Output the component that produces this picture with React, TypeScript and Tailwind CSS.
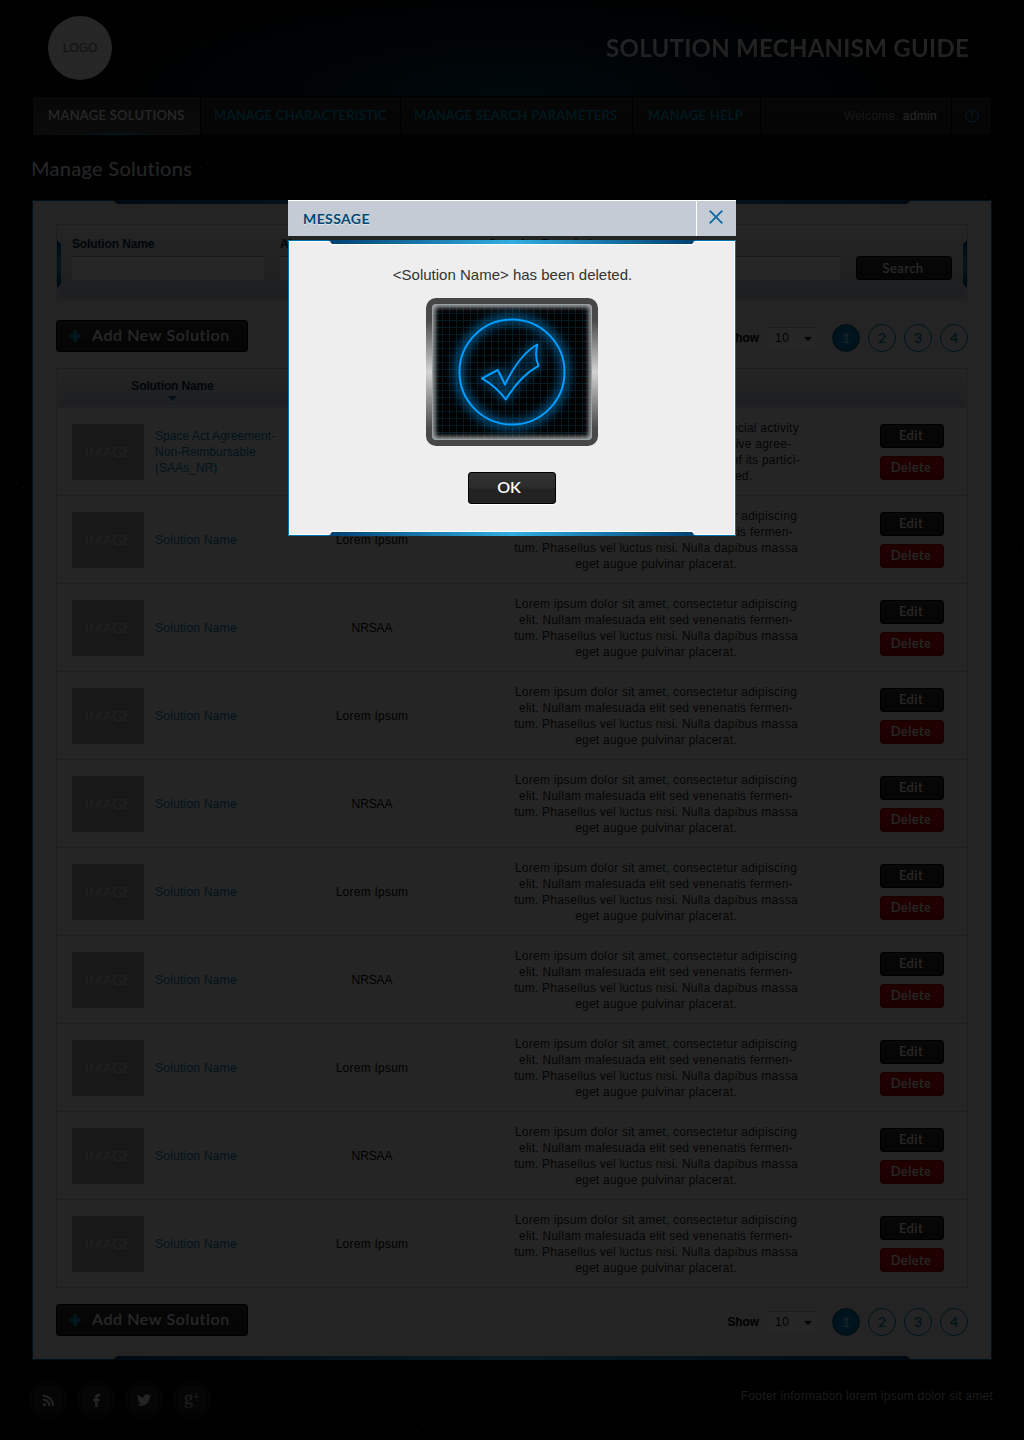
import React from "react";
import { FaFacebookF, FaRss, FaTwitter } from "react-icons/fa";

const LOREM = [
  "Lorem ipsum dolor sit amet, consectetur adipiscing",
  "elit. Nullam malesuada elit sed venenatis fermen-",
  "tum. Phasellus vel luctus nisi. Nulla dapibus massa",
  "eget augue pulvinar placerat.",
];

const SPACE_ACT = [
  "Engagement with any partner on any official activity",
  "under all the terms of any legally effective agree-",
  "ment in which each side bears the cost of its partici-",
  "pation and no fees are exchanged.",
];

const ROWS = Array.from({ length: 10 }, (_, i) => ({
  name: i === 0 ? ["Space Act Agreement-", "Non-Reimbursable", "(SAAs_NR)"] : ["Solution Name"],
  type: i % 2 === 0 ? "NRSAA" : "Lorem Ipsum",
  text: i === 0 ? SPACE_ACT : LOREM,
}));

const STARS = Array.from({ length: 420 }, (_, i) => ({
  x: (i * 397 + ((i * i * 31) % 613)) % 1024,
  y: (i * 733 + ((i * i * 17) % 911)) % 1440,
  o: 0.1 + ((i * 7) % 11) / 20,
}));

function Bar({ id, w, cut = 4, flip = false, className }: { id: string; w: number; cut?: number; flip?: boolean; className: string }) {
  const pts = flip ? `${cut},0 ${w - cut},0 ${w},4 0,4` : `0,0 ${w},0 ${w - cut},4 ${cut},4`;
  return (
    <svg className={className} width={w} height={4} viewBox={`0 0 ${w} 4`}>
      <defs>
        <linearGradient id={id}>
          <stop offset="0" stopColor="#003f73" />
          <stop offset="0.5" stopColor="#32aee2" />
          <stop offset="1" stopColor="#003f73" />
        </linearGradient>
      </defs>
      <polygon points={pts} fill={`url(#${id})`} />
    </svg>
  );
}

function Tab({ id, right = false }: { id: string; right?: boolean }) {
  return (
    <svg className={right ? "absolute right-0 top-[15px]" : "absolute left-0 top-[15px]"} width={4} height={48}>
      <defs>
        <linearGradient id={id} x2="0" y2="1">
          <stop offset="0" stopColor="#003f73" />
          <stop offset="0.5" stopColor="#1f8fc4" />
          <stop offset="1" stopColor="#003f73" />
        </linearGradient>
      </defs>
      <polygon points={right ? "4,0 0,4 0,44 4,48" : "0,0 4,4 4,44 0,48"} fill={`url(#${id})`} />
    </svg>
  );
}

function AddButton() {
  return (
    <button className="flex h-8 w-48 items-center whitespace-nowrap rounded-[3px] border border-black bg-linear-to-b from-[#303030] to-[#222] pl-3 font-[Lato] text-[16px] font-semibold leading-6 tracking-[0.6px] text-white">
      <svg width="13" height="12" viewBox="0 0 13 12" className="mr-[10px]">
        <path d="M4.500 0.500h3.500v4h4v3H8v4H4.500v-4H.5v-3h4z" fill="#00a0dc" />
      </svg>
      <span className="-mt-0.5">Add New Solution</span>
    </button>
  );
}

function Pager() {
  return (
    <div className="flex items-center">
      <span className="mr-[9px] text-[12px] font-bold tracking-[-0.1px] text-black">Show</span>
      <div className="mr-4 flex h-[22px] w-12 items-center justify-between border-t border-[#bbb] bg-white pb-px pl-[7px] pr-1 text-[12px] tracking-[0.6px] text-black">
        10
        <svg width="8" height="4" className="mt-[2px]">
          <path d="M0 0h8L4 4z" fill="#000" />
        </svg>
      </div>
      <div className="flex gap-2 font-[Lato] text-[14px] font-semibold leading-[24px]">
        {[1, 2, 3, 4].map((n) => (
          <span
            key={n}
            className={
              n === 1
                ? "flex size-7 justify-center rounded-full border border-[#005a88] bg-[radial-gradient(circle,#009bd2,#006fa8)] pt-px text-[#a0dcf5]"
                : "flex size-7 justify-center rounded-full border border-[#0080b0] pt-px text-[#0080b0]"
            }
          >
            {n}
          </span>
        ))}
      </div>
    </div>
  );
}

function Field({ label, className }: { label: string; className: string }) {
  return (
    <label className={`${className} block text-[12px] font-bold leading-4 tracking-[-0.13px] text-[#002840]`}>
      <span className="block whitespace-nowrap">{label}</span>
      <span className="mt-1 block h-6 border-t border-[#9fa8b5] bg-white" />
    </label>
  );
}

function NavItem({ label, className }: { label: string; className: string }) {
  return (
    <a className={`${className} flex items-center whitespace-nowrap border-l border-l-black pl-[13px] text-[#00a0d0]`}>{label}</a>
  );
}

function Page() {
  return (
    <div className="relative h-[1440px] w-[1024px] bg-black">
      <svg className="absolute inset-0" width="1024" height="1440">
        {STARS.map((s, i) => (
          <rect key={i} x={s.x} y={s.y} width="1" height="1" fill="#fff" opacity={s.o} />
        ))}
      </svg>
      <div className="relative flex h-full flex-col">
        <header className="flex h-[96px] items-start justify-between bg-[radial-gradient(ellipse_430px_115px_at_50%_100%,#003a52_0%,#001a2a_50%,transparent_100%)] pl-12 pr-[55px] pt-4">
          <div className="flex size-16 items-center justify-center rounded-full bg-white text-[12px] text-[#5c6b78]">LOGO</div>
          <h1 className="mt-4 whitespace-nowrap bg-linear-to-b from-white to-[#c8c8c8] bg-clip-text font-[Lato] text-[24px] font-bold leading-8 tracking-[0.27px] text-transparent">SOLUTION MECHANISM GUIDE</h1>
        </header>

        <nav className="ml-[33px] mt-px flex h-[38px] w-[958px] rounded-[2px] bg-linear-to-b from-[#2c2c2c] to-[#202020] font-[Lato] text-[13px] font-semibold tracking-[0.26px]">
          <a className="relative flex w-[167px] items-center bg-linear-to-b from-[#343434] to-[#484848] pl-[15px] whitespace-nowrap text-white">
            MANAGE SOLUTIONS
            <span className="absolute inset-x-5 bottom-0 h-px bg-linear-to-r from-transparent via-[#00a8e8] to-transparent" />
            <span className="absolute inset-x-12 bottom-0 h-1 bg-[radial-gradient(ellipse_at_bottom,#00a8e8aa,transparent_70%)]" />
          </a>
          <NavItem label="MANAGE CHARACTERISTIC" className="w-[200px]" />
          <NavItem label="MANAGE SEARCH PARAMETERS" className="w-[232px]" />
          <NavItem label="MANAGE HELP" className="w-[128px] pl-[15px]" />
          <div className="flex w-[191px] items-center justify-end border-l border-black pr-[14px] font-['Liberation_Sans'] text-[12px] font-normal tracking-[0.3px] text-[#9a9a9a]">
            Welcome,&nbsp;<span className="text-white">admin</span>
          </div>
          <div className="flex flex-1 items-center justify-center border-l border-black">
            <svg width="14" height="14" viewBox="0 0 14 14" fill="none" stroke="#00a0d0" strokeWidth="1.200">
              <path d="M5 .9a6.300 6.300 0 1 0 4 0M7 .2v7.500" />
            </svg>
          </div>
        </nav>

        <h2 className="mt-5 pl-[31px] font-[Lato] text-[20px] leading-[26px] tracking-[0.3px] text-white">Manage Solutions</h2>

        <main className="relative ml-8 mt-[19px] h-[1160px] w-[960px] border border-[#0073aa] bg-[#eee] px-[23px] pt-[23px]">
          <Bar id="pageTop" w={798} className="absolute -top-px left-20" />
          <Bar id="pageBottom" w={798} flip className="absolute -bottom-px left-20" />
          <section className="relative flex h-[78px] border border-[#d2d2d2] bg-linear-to-b from-[#f4f4f4] to-[#c4cbd5] px-[15px] pt-[11px] shadow-[inset_0_0_0_1px_#f4f4f4]">
            <Tab id="tabL" />
            <Tab id="tabR" right />
            <Field label="Solution Name" className="w-48" />
            <Field label="Abstract" className="ml-4 w-48" />
            <Field label="Contains Description" className="ml-4 w-[352px]" />
            <button className="ml-4 mt-5 h-6 w-24 rounded-[3px] border border-black bg-linear-to-b from-[#303030] to-[#222] pr-[2px] font-[Lato] text-[13px] font-semibold leading-[21px] tracking-[0.4px] text-white">Search</button>
          </section>

          <div className="mt-[18px] flex h-8 items-center justify-between">
            <AddButton />
            <div className="mt-1"><Pager /></div>
          </div>

          <section className="mt-4 h-[920px] border border-[#d2d2d2] bg-[#f8f8f8]">
            <div className="flex h-[39px] border-b border-[#d2d2d2] bg-linear-to-b from-[#f4f4f4] to-[#c4cbd5] text-center text-[12px] font-bold leading-4 tracking-[-0.13px] text-[#002840] shadow-[inset_0_0_0_1px_#f4f4f4]">
              <div className="w-[231px] pt-[9px]">
                Solution Name
                <svg width="9" height="5" className="mx-auto mt-0.5">
                  <path d="M0 0h9L4.500 5z" fill="#0073a5" />
                </svg>
              </div>
              <div className="w-[168px] pt-[9px]">Type</div>
              <div className="w-[200px] pt-[9px]">Description</div>
            </div>
            {ROWS.map((r, i) => (
              <div key={i} className="flex h-[88px] items-center border-b border-[#d2d2d2] pl-[15px] text-[12px] leading-4 tracking-[0.24px] last:border-b-0">
                <div className="flex h-14 w-[72px] items-center justify-center bg-[#a0a0a0] font-[Lato] text-[14px] tracking-[0.3px] text-[#d8d8d8]">IMAGE</div>
                <div className={i === 0 ? "ml-[11px] w-[133px] whitespace-nowrap tracking-[0.04px] text-[#0080b0]" : "ml-[11px] w-[133px] whitespace-nowrap text-[#0080b0]"}>
                  {r.name.map((l) => (
                    <div key={l}>{l}</div>
                  ))}
                </div>
                <div className={r.type === "NRSAA" ? "w-[168px] text-center tracking-[-0.1px] text-black" : "w-[168px] text-center text-black"}>{r.type}</div>
                <div className="w-[400px] whitespace-nowrap text-center text-[#222]">
                  {r.text.map((l) => (
                    <div key={l}>{l}</div>
                  ))}
                </div>
                <div className="ml-6 flex w-16 flex-col gap-2 font-[Lato] text-[13px] font-semibold tracking-[0.4px] text-white">
                  <button className="h-6 rounded-[3px] border border-black bg-linear-to-b from-[#303030] to-[#222] pr-[2px] leading-[21px]">Edit</button>
                  <button className="h-6 rounded-[3px] border border-[#b00000] bg-linear-to-b from-[#e00000] to-[#b80000] pr-[2px] leading-[21px]">Delete</button>
                </div>
              </div>
            ))}
          </section>

          <div className="mt-4 flex h-8 items-center justify-between">
            <AddButton />
            <div className="mt-1"><Pager /></div>
          </div>
        </main>

        <footer className="flex justify-between pl-8 pr-[31px] pt-6">
          <div className="flex gap-4 text-[#e8e8e8]">
            {[
              <FaRss key="r" size={13} />,
              <FaFacebookF key="f" size={13} />,
              <FaTwitter key="t" size={14} />,
              <span key="g" className="flex items-start font-['Liberation_Serif'] text-[18px] leading-[18px] text-[#d0d0d0]">
                <span className="-mt-1">g</span>
                <span className="-mt-0.5 text-[12px] leading-3">+</span>
              </span>,
            ].map((icon, i) => (
              <div key={i} className="flex size-8 items-center justify-center rounded-full border border-black bg-linear-to-b from-[#303030] to-[#202020] shadow-[0_0_6px_1px_#4a4a4a]">
                {icon}
              </div>
            ))}
          </div>
          <p className="mt-1 text-[12px] leading-4 tracking-[0.24px] text-[#b4b4b4]">Footer information lorem ipsum dolor sit amet</p>
        </footer>
      </div>
    </div>
  );
}

function CheckScreen() {
  const grid = Array.from({ length: 23 }, (_, i) => 9.5 + i * 7);
  const mark = "M56 80.300L71.800 72 79 86.500C88 68 98 54 111.300 46.500C109.500 54 110 62 112.500 67.800C99 75 88 88 79.800 101.500C73 92 65 85.500 56 80.300z";
  return (
    <svg width="172" height="148" viewBox="0 0 172 148" className="block">
      <defs>
        <linearGradient id="bezel" x2="0" y2="1">
          <stop offset="0" stopColor="#454545" />
          <stop offset="0.15" stopColor="#4a4a4a" />
          <stop offset="0.5" stopColor="#d2d2d2" />
          <stop offset="0.88" stopColor="#4a4a4a" />
          <stop offset="1" stopColor="#454545" />
        </linearGradient>
        <filter id="glow" x="-30%" y="-30%" width="160%" height="160%">
          <feGaussianBlur stdDeviation="5.500" />
        </filter>
        <filter id="soft" x="-10%" y="-10%" width="120%" height="120%">
          <feGaussianBlur stdDeviation="2.500" />
        </filter>
        <clipPath id="glass">
          <rect x="6" y="6" width="160" height="136" rx="3.500" />
        </clipPath>
      </defs>
      <rect width="172" height="148" rx="10" fill="url(#bezel)" />
      <g clipPath="url(#glass)">
        <rect x="6" y="6" width="160" height="136" fill="#000" />
        <g stroke="#031a23" strokeWidth="1">
          {grid.map((p) => (
            <path key={p} d={`M${p} 6V142M6 ${p - 1}H166`} />
          ))}
        </g>
        <rect x="6" y="6" width="160" height="136" rx="3" fill="none" stroke="#b4b4b4" strokeWidth="6" filter="url(#soft)" />
        <g fill="none" stroke="#0088d8" strokeWidth="5.500" filter="url(#glow)">
          <circle cx="86" cy="74" r="53" />
          <path d={mark} strokeWidth="3" />
        </g>
        <g fill="none" stroke="#009dff" strokeWidth="2" strokeLinejoin="round">
          <circle cx="86" cy="74" r="52.500" />
          <path d={mark} />
        </g>
      </g>
      <rect x="6.500" y="6.500" width="159" height="135" rx="3.500" fill="none" stroke="#98a2a5" />
    </svg>
  );
}

function Modal() {
  return (
    <div className="absolute inset-0 flex items-start justify-center bg-black/85 pt-[200px]">
      <div className="w-[448px]">
        <div className="flex h-9 border-t border-white bg-[#c4cbd5]">
          <div className="flex-1 pl-[15px] pt-[7px] font-[Lato] text-[14px] font-bold leading-[22px] tracking-[0.4px] text-[#004a72] [text-shadow:0_1px_0_#fff8]">MESSAGE</div>
          <button className="flex w-10 justify-center border-l border-white pr-px pt-[9px]">
            <svg width="14" height="14" viewBox="0 0 14 14" stroke="#0f6ca0" strokeWidth="1.900">
              <path d="M.7.7l12.600 12.600M13.300.7L.7 13.300" />
            </svg>
          </button>
        </div>
        <div className="relative mt-1 flex h-[296px] flex-col items-center border border-[#0073aa] bg-[#eee] shadow-[inset_0_0_0_1px_#fff]">
          <Bar id="modalTop" w={366} cut={3} className="absolute -top-px left-10 shadow-[0_1px_0_#fff]" />
          <Bar id="modalBottom" w={366} cut={3} flip className="absolute -bottom-px left-10 shadow-[0_-1px_0_#fff]" />
          <p className="mt-6 pl-px text-[15px] leading-5 text-[#333]">&lt;Solution Name&gt; has been deleted.</p>
          <div className="mt-[13px]">
            <CheckScreen />
          </div>
          <button className="mt-[26px] h-8 w-[88px] rounded-[3px] border border-black bg-linear-to-b from-[#333] from-0% via-[#2b2b2b] via-50% to-[#222] to-55% pb-[3px] pr-[6px] font-[Lato] text-[16px] font-semibold text-white shadow-[0_1px_0_#fff]">OK</button>
        </div>
      </div>
    </div>
  );
}

export default function App() {
  return (
    <div className="relative h-[1440px] w-[1024px] overflow-hidden bg-black font-['Liberation_Sans',Arial,sans-serif]">
      <Page />
      <Modal />
    </div>
  );
}
